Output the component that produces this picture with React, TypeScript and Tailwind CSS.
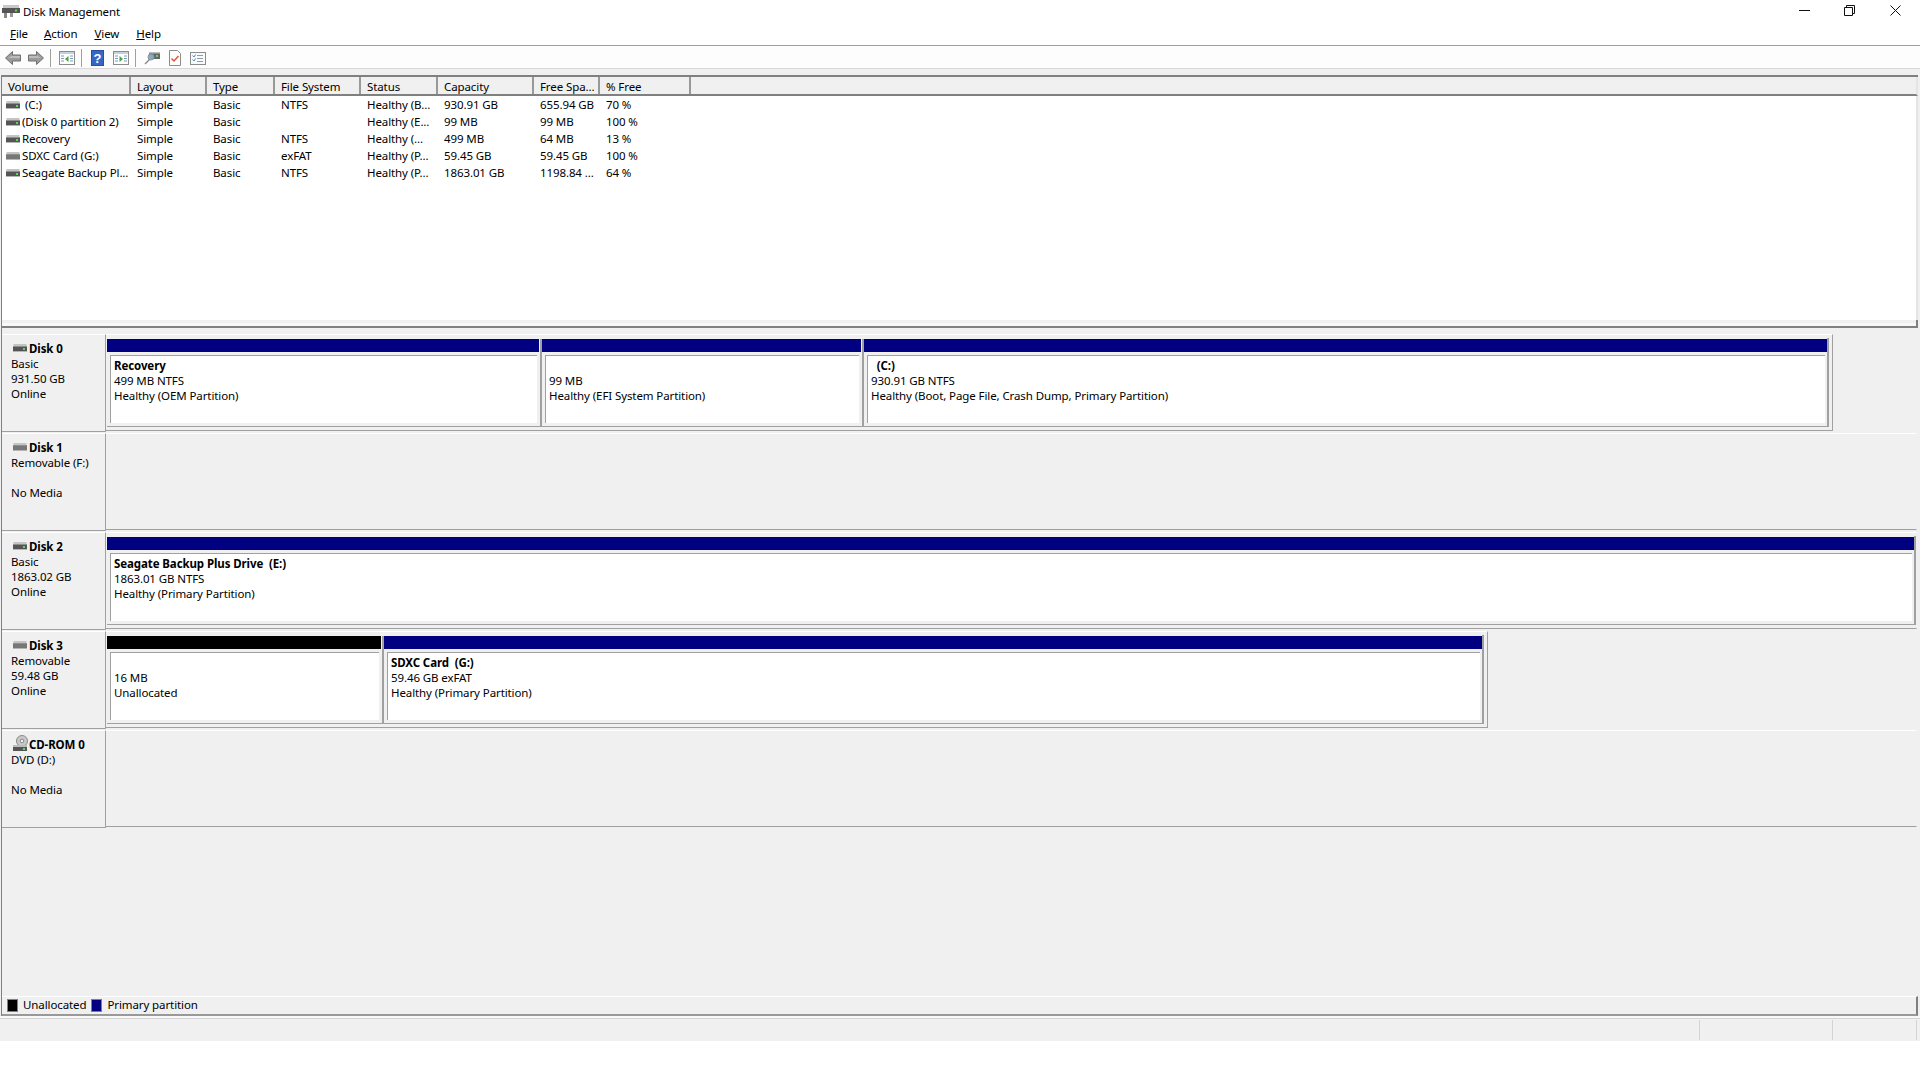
import React from "react";

const font = "font-['Noto_Sans','Open_Sans',sans-serif]";

function Drive({ led = true }: { led?: boolean }) {
  return (
    <svg width="14" height="8" viewBox="0 0 14 8" className="shrink-0">
      <rect x="0.5" y="0" width="13" height="2" fill="#c4c4c4" />
      <rect x="0" y="2" width="14" height="1" fill="#8e8e8e" />
      <rect x="0" y="3" width="14" height="4" fill={led ? "#555" : "#777"} />
      <rect x="0" y="7" width="14" height="1" fill="#b5b5b5" />
      {led && <rect x="10" y="4" width="2" height="2" fill="#5fd35f" />}
    </svg>
  );
}

function CdIcon() {
  return (
    <svg width="16" height="17" viewBox="0 0 16 17" className="shrink-0">
      <circle cx="9" cy="6" r="5.5" fill="#c8c8c8" stroke="#8a8a8a" />
      <circle cx="9" cy="6" r="1.8" fill="#f0f0f0" stroke="#8a8a8a" />
      <rect x="0" y="10" width="14" height="2" fill="#bdbdbd" />
      <rect x="0" y="12" width="14" height="4" fill="#555" />
      <rect x="10" y="13" width="2" height="2" fill="#5fd35f" />
    </svg>
  );
}

function Arrow({ flip }: { flip?: boolean }) {
  return (
    <svg width="16" height="14" viewBox="0 0 16 14" className={flip ? "-scale-x-100" : ""}>
      <path d="M7.5.5 .5 7l7 6.500V10h8V4h-8z" fill="#9b9b9b" stroke="#6f6f6f" />
      <path d="M7 4.500 3 7h12V5H7z" fill="#bdbdbd" />
    </svg>
  );
}

function PaneIcon({ right }: { right?: boolean }) {
  return (
    <svg width="16" height="14" viewBox="0 0 16 14">
      <rect x=".5" y=".5" width="15" height="13" fill="#fff" stroke="#8c8c8c" />
      <rect x="1" y="1" width="14" height="2" fill="#c4d0dc" />
      <path d="M2 5h3M2 7.500h3M2 10h3M11 5h3M11 7.500h3M11 10h3" stroke="#7b98b8" />
      <path d={right ? "M6.500 5v6l3.500-3z" : "M9.500 5v6L6 8z"} fill="#3fa843" />
    </svg>
  );
}

function Toolbar() {
  const Sep = () => <div className="h-[18px] w-px bg-[#a0a0a0]" />;
  return (
    <div className="flex h-[22px] items-center bg-[#fdfdfd] pl-[5px] pt-[2px]">
      <Arrow />
      <div className="ml-[7px]">
        <Arrow flip />
      </div>
      <div className="ml-[6px]">
        <Sep />
      </div>
      <div className="ml-[8px]">
        <PaneIcon />
      </div>
      <div className="ml-[6px]">
        <Sep />
      </div>
      <svg width="13" height="16" viewBox="0 0 13 16" className="ml-[9px]">
        <rect width="13" height="16" fill="#2b4fa8" />
        <rect x="1" y="1" width="11" height="14" fill="#3767c4" />
        <text x="6.500" y="12.500" textAnchor="middle" fontSize="13" fontWeight="700" fill="#fff" fontFamily="Liberation Sans">
          ?
        </text>
      </svg>
      <div className="ml-[9px]">
        <PaneIcon right />
      </div>
      <div className="ml-[6px]">
        <Sep />
      </div>
      <svg width="16" height="14" viewBox="0 0 16 14" className="ml-[8px]">
        <rect x="5" y="2" width="11" height="6" fill="#666" />
        <rect x="5" y="1" width="11" height="1.500" fill="#bbb" />
        <rect x="12" y="4" width="2" height="2" fill="#5fd35f" />
        <path d="M1 13 6 8" stroke="#8a8a8a" strokeWidth="1.500" />
        <circle cx="7" cy="6" r="3" fill="#9cc4e4" fillOpacity=".7" stroke="#7a8fa0" />
      </svg>
      <svg width="12" height="16" viewBox="0 0 12 16" className="ml-[9px]">
        <path d="M.5.500h8l3 3v12H.5z" fill="#fff" stroke="#8c8c8c" />
        <path d="M2.500 8.500 5 11l4.500-5" fill="none" stroke="#e0562a" strokeWidth="1.500" />
      </svg>
      <svg width="16" height="13" viewBox="0 0 16 13" className="ml-[9px]">
        <rect x=".5" y=".5" width="15" height="12" fill="#f7fafc" stroke="#8c8c8c" />
        <path d="M7 3.500h6M7 6.500h6M7 9.500h6" stroke="#9a9a9a" />
        <path d="M2.500 3.500 4 5l1.500-2.500M2.500 7.500 4 9l1.500-2.500" fill="none" stroke="#4e86c6" />
      </svg>
    </div>
  );
}

const columns = [
  { name: "Volume", w: "w-[129px]" },
  { name: "Layout", w: "w-[76px]" },
  { name: "Type", w: "w-[68px]" },
  { name: "File System", w: "w-[86px]" },
  { name: "Status", w: "w-[77px]" },
  { name: "Capacity", w: "w-[96px]" },
  { name: "Free Spa...", w: "w-[66px]" },
  { name: "% Free", w: "w-[91px]" },
];

const volumes = [
  { led: true, cells: ["\u00a0(C:)", "Simple", "Basic", "NTFS", "Healthy (B...", "930.91 GB", "655.94 GB", "70 %"] },
  { led: true, cells: ["(Disk 0 partition 2)", "Simple", "Basic", "", "Healthy (E...", "99 MB", "99 MB", "100 %"] },
  { led: true, cells: ["Recovery", "Simple", "Basic", "NTFS", "Healthy (...", "499 MB", "64 MB", "13 %"] },
  { led: false, cells: ["SDXC Card (G:)", "Simple", "Basic", "exFAT", "Healthy (P...", "59.45 GB", "59.45 GB", "100 %"] },
  { led: true, cells: ["Seagate Backup Pl...", "Simple", "Basic", "NTFS", "Healthy (P...", "1863.01 GB", "1198.84 ...", "64 %"] },
];

function VolumeList() {
  return (
    <div className="flex h-[253px] flex-col border-y-2 border-l border-[#808080] bg-white">
      <div className="box-content flex h-[17px] shrink-0 border-b-2 border-r-2 border-b-[#808080] border-r-[#e4e4e4] bg-[#f0f0f0]">
        {columns.map((c) => (
          <div key={c.name} className={`${c.w} shrink-0 whitespace-nowrap border-r-2 border-[#999999] pl-[6px] leading-[20px]`}>
            {c.name}
          </div>
        ))}
      </div>
      <div className="flex-1 border-r-2 border-[#e4e4e4]">
        {volumes.map((v) => (
          <div key={v.cells[0]} className="flex h-[17px] items-center leading-[17px]">
            {v.cells.map((t, i) =>
              i === 0 ? (
                <div key={i} className="flex w-[129px] shrink-0 items-center gap-[2px] whitespace-nowrap pl-[4px]">
                  <Drive led={v.led} />
                  <span>{t}</span>
                </div>
              ) : (
                <div key={i} className={`${columns[i].w} shrink-0 whitespace-nowrap pl-[6px]`}>
                  {t}
                </div>
              ),
            )}
          </div>
        ))}
      </div>
      <div className="h-[3px] border-r-2 border-[#808080] bg-[#f0f0f0]" />
      <div className="h-[3px] border-r-2 border-[#808080] bg-[#f8f8f8]" />
    </div>
  );
}

type Part = {
  w: string;
  black?: boolean;
  last?: boolean;
  title?: string;
  lines: string[];
};

function Partition({ p }: { p: Part }) {
  return (
    <div className={`${p.w} flex shrink-0 flex-col ${p.last ? "" : "border-r-2 border-[#a0a0a0]"}`}>
      <div className={`h-[13px] shrink-0 ${p.last ? "" : "mr-px"} ${p.black ? "bg-black" : "bg-[#000080]"}`} />
      <div className={`mt-[3px] ml-[3px] h-[68px] border-l border-t border-[#a0a0a0] bg-white pl-[3px] pt-[2px] leading-[15px] ${p.last ? "mr-[2px]" : "mr-[3px]"}`}>
        <div className="h-[15px] whitespace-nowrap font-bold">{p.title}</div>
        {p.lines.map((l) => (
          <div key={l} className="h-[15px] whitespace-nowrap">
            {l}
          </div>
        ))}
      </div>
    </div>
  );
}

type Disk = {
  name: string;
  icon?: "cd" | "noled";
  info: string[];
  frame: string;
  parts: Part[];
};

const disks: Disk[] = [
  {
    name: "Disk 0",
    info: ["Basic", "931.50 GB", "Online"],
    frame: "w-[1727px] border-r-[#a0a0a0] pr-[3px]",
    parts: [
      { w: "w-[435px]", title: "Recovery", lines: ["499 MB NTFS", "Healthy (OEM Partition)"] },
      { w: "w-[322px]", title: "", lines: ["99 MB", "Healthy (EFI System Partition)"] },
      { w: "w-[963px]", last: true, title: "\u00a0\u00a0(C:)", lines: ["930.91 GB NTFS", "Healthy (Boot, Page File, Crash Dump, Primary Partition)"] },
    ],
  },
  {
    name: "Disk 1",
    icon: "noled",
    info: ["Removable (F:)", "", "No Media"],
    frame: "w-[1811px] border-r-transparent",
    parts: [],
  },
  {
    name: "Disk 2",
    info: ["Basic", "1863.02 GB", "Online"],
    frame: "w-[1811px] border-r-transparent",
    parts: [{ w: "w-[1807px]", last: true, title: "Seagate Backup Plus Drive\u00a0\u00a0(E:)", lines: ["1863.01 GB NTFS", "Healthy (Primary Partition)"] }],
  },
  {
    name: "Disk 3",
    icon: "noled",
    info: ["Removable", "59.48 GB", "Online"],
    frame: "w-[1382px] border-r-[#a0a0a0] pr-[3px]",
    parts: [
      { w: "w-[277px]", black: true, title: "", lines: ["16 MB", "Unallocated"] },
      { w: "w-[1098px]", last: true, title: "SDXC Card\u00a0\u00a0(G:)", lines: ["59.46 GB exFAT", "Healthy (Primary Partition)"] },
    ],
  },
  {
    name: "CD-ROM 0",
    icon: "cd",
    info: ["DVD (D:)", "", "No Media"],
    frame: "w-[1811px] border-r-transparent",
    parts: [],
  },
];

function DiskRow({ d }: { d: Disk }) {
  return (
    <div className="flex h-[99px]">
      <div className="h-[98px] w-[104px] shrink-0 border-y border-r border-t-white border-r-[#a0a0a0] border-b-[#a0a0a0] pl-[9px] leading-[15px]">
        <div className="flex h-[21px] items-end">
          <div className="flex h-[21px] w-[18px] items-center pl-[2px] pt-[4px]">
            {d.icon === "cd" ? <CdIcon /> : <Drive led={d.icon !== "noled"} />}
          </div>
          <span className="h-[20px] font-bold leading-[25px]">{d.name}</span>
        </div>
        {d.info.map((t, i) => (
          <div key={i} className="h-[15px] whitespace-nowrap">
            {t}
          </div>
        ))}
      </div>
      <div className={`${d.frame} h-[97px] shrink-0 border-y border-r border-t-white border-b-[#a0a0a0] pl-px pt-[3px]`}>
        {d.parts.length > 0 ? (
          <div className="flex h-[89px] border-b border-r-2 border-[#a0a0a0] pt-px">
            {d.parts.map((p, i) => (
              <Partition key={i} p={p} />
            ))}
          </div>
        ) : null}
      </div>
    </div>
  );
}

function Legend() {
  return (
    <div className="flex h-[20px] items-center border-t border-r-2 border-b-2 border-t-white border-r-[#808080] border-b-[#999999] pl-[5px]">
      <div className="h-[13px] w-[11px] border border-[#808080] bg-black" />
      <span className="ml-[5px] pb-[2px]">Unallocated</span>
      <div className="ml-[5px] h-[13px] w-[11px] border border-[#808080] bg-[#000080]" />
      <span className="ml-[5px] pb-[2px]">Primary partition</span>
    </div>
  );
}

export default function App() {
  return (
    <div className={`${font} h-[1080px] w-[1920px] overflow-hidden bg-white text-[11.5px] tracking-[-0.1px] text-black`}>
      <div className="flex h-[23px] items-center">
        <svg width="18" height="15" viewBox="0 0 18 15" className="ml-[2px]">
          <rect x="1" y="1" width="16" height="3" fill="#c8c8c8" />
          <rect x="0" y="4" width="18" height="5" fill="#555" />
          <rect x="13" y="5.500" width="2" height="2" fill="#5fd35f" />
          <rect x="2" y="9" width="3" height="5" fill="#888" />
          <rect x="8" y="9" width="3" height="4" fill="#999" />
        </svg>
        <span className="ml-[3px]">Disk Management</span>
        <div className="ml-auto flex h-[23px] items-start">
          <svg width="11" height="1" viewBox="0 0 11 1" className="mt-[10px]">
            <rect width="11" height="1" fill="#111" />
          </svg>
          <svg width="11" height="11" viewBox="0 0 11 11" className="ml-[34px] mt-[5px]">
            <path d="M.5 2.500h8v8h-8zM2.500 2.500v-2h8v8h-2" fill="none" stroke="#111" />
          </svg>
          <svg width="11" height="11" viewBox="0 0 11 11" className="ml-[35px] mr-[19px] mt-[5px]">
            <path d="M.5.500l10 10M10.500.500l-10 10" stroke="#111" />
          </svg>
        </div>
      </div>
      <div className="box-content flex h-[22px] items-center border-b border-[#a0a0a0]">
        {[
          ["F", "ile", "ml-[10px]"],
          ["A", "ction", "ml-[16px]"],
          ["V", "iew", "ml-[17px]"],
          ["H", "elp", "ml-[17px]"],
        ].map(([a, b, m]) => (
          <span key={a} className={m}>
            <span className="underline">{a}</span>
            {b}
          </span>
        ))}
      </div>
      <Toolbar />
      <div className="h-px bg-[#d9d9d9]" />
      <div className="bg-[#f0f0f0]">
        <div className="h-[6px]" />
        <div className="ml-px w-[1917px]">
          <VolumeList />
          <div className="flex h-[688px] flex-col border-l border-[#808080]">
            <div className="h-[6px] shrink-0" />
            {disks.map((d) => (
              <DiskRow key={d.name} d={d} />
            ))}
            <div className="flex-1" />
            <Legend />
          </div>
        </div>
        <div className="h-[2px] bg-[#f8f8f8]" />
        <div className="flex h-[23px] justify-end border-t border-[#d4d4d4] pb-px pt-px">
          <div className="w-[133px] border-l border-[#d4d4d4]" />
          <div className="mr-[3px] w-[85px] border-x border-[#d4d4d4]" />
        </div>
      </div>
    </div>
  );
}
